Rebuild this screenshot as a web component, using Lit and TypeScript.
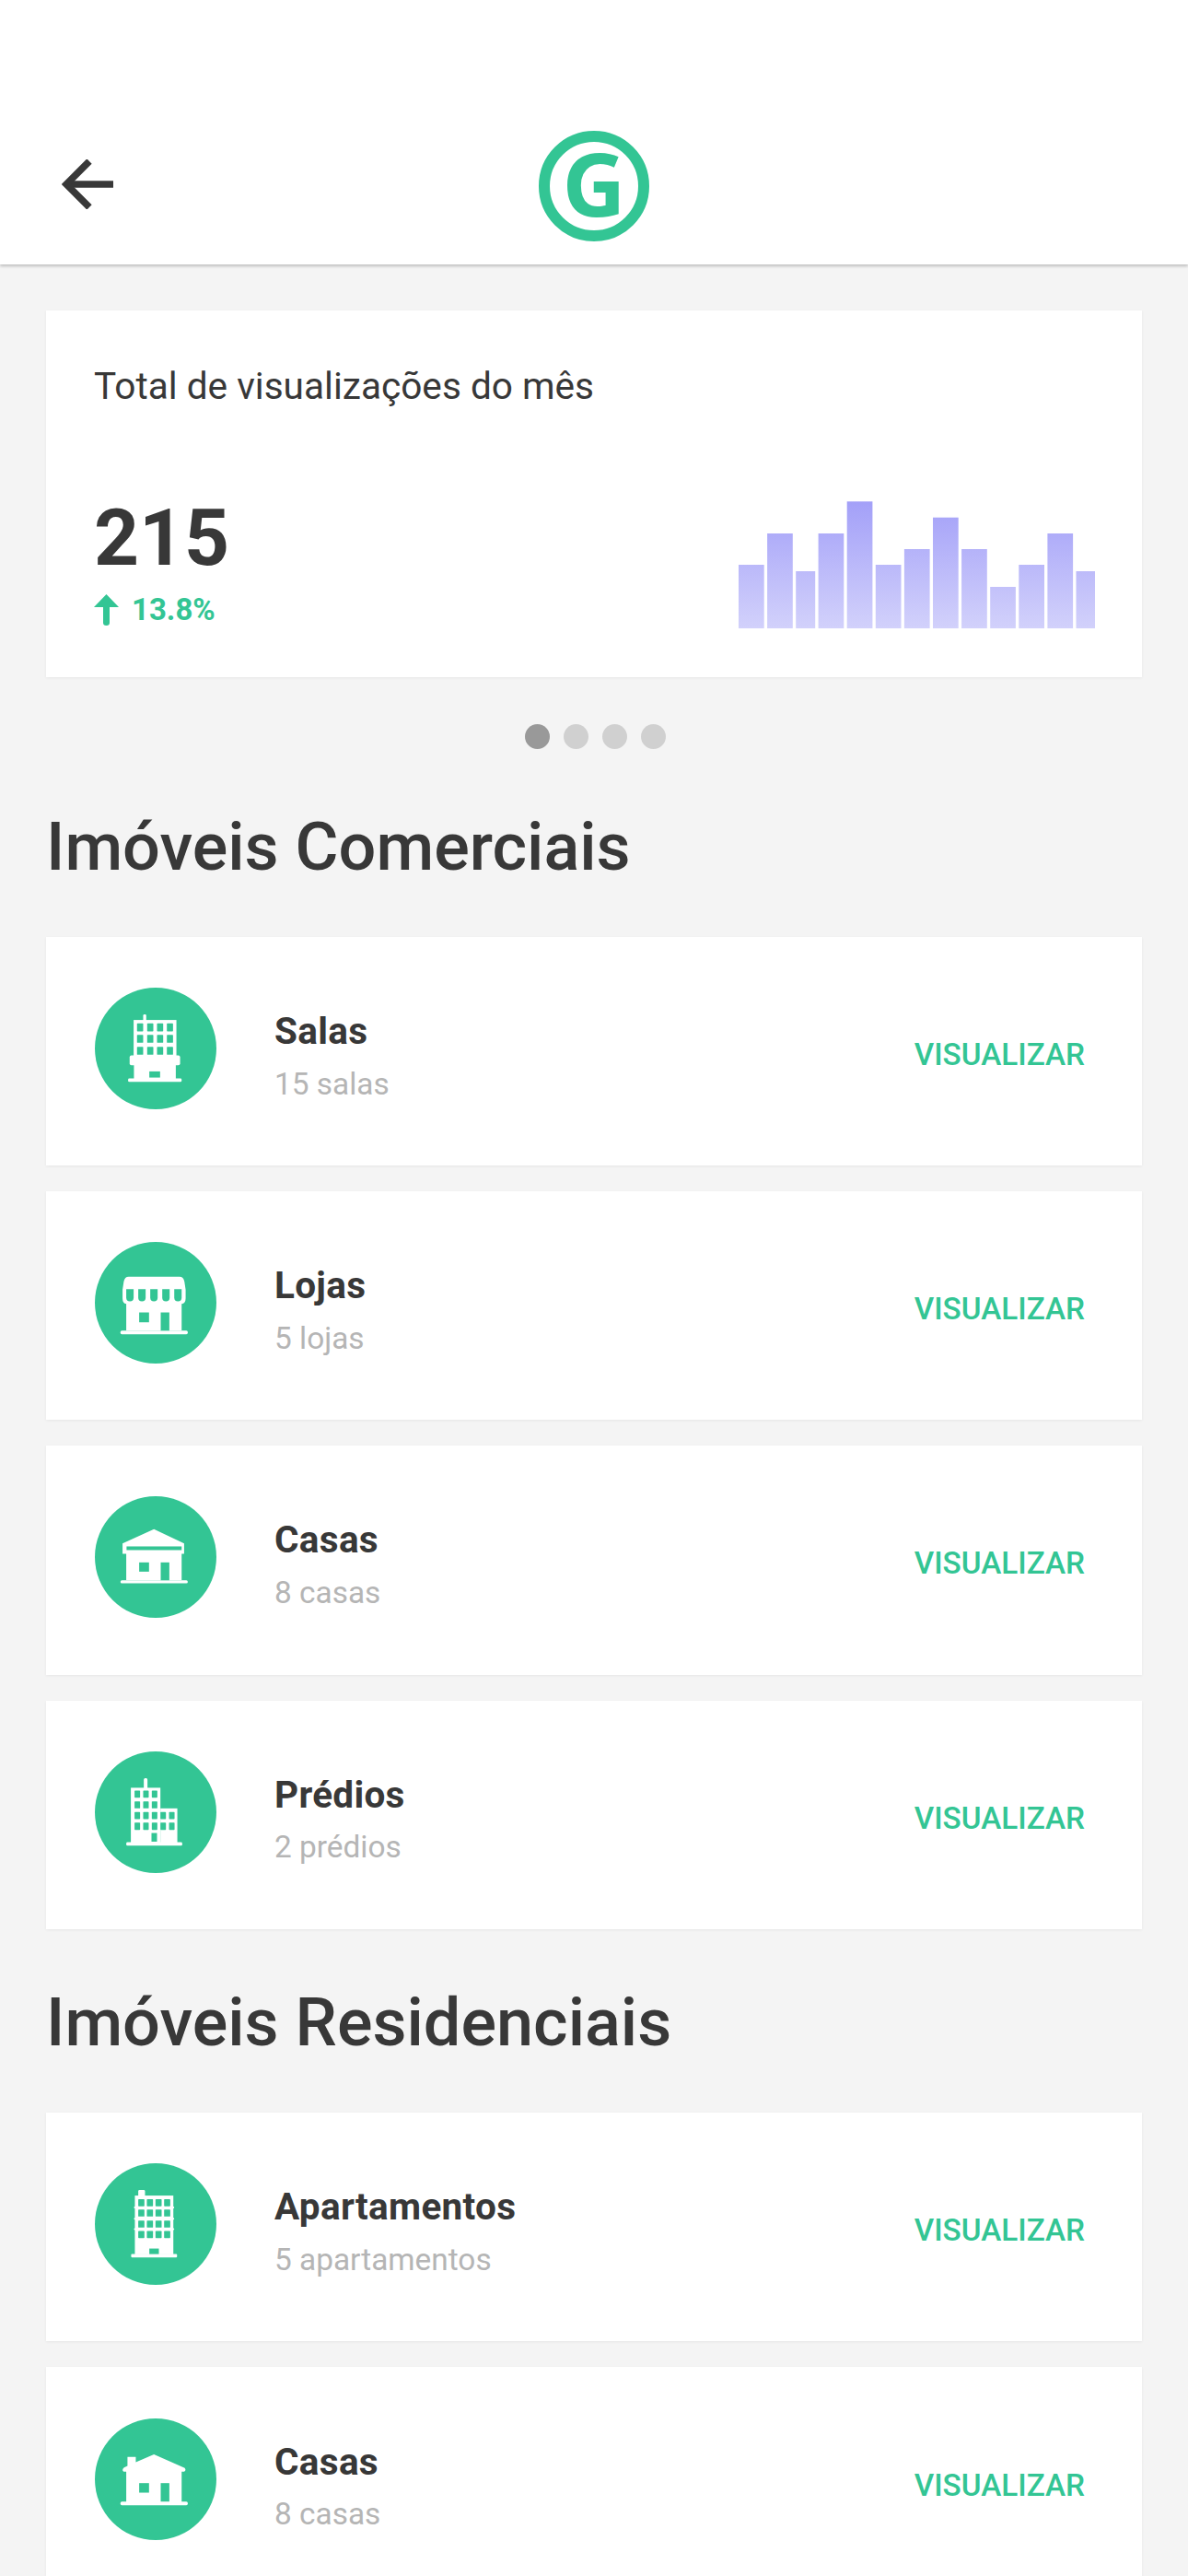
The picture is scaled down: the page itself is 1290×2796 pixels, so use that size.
import { LitElement, css, html, svg } from 'lit';
import { customElement } from 'lit/decorators.js';

const GREEN = '#33c594';

// draws a list of [x1, y1, x2, y2] boxes, corners are in the same units as the viewBox
const boxes = (list: number[][], fill: string, r = 0) =>
  list.map(
    ([a, b, c, d]) =>
      svg`<rect x=${a} y=${b} width=${c - a} height=${d - b} rx=${r} fill=${fill}></rect>`
  );

// window grid helper
const grid = (cols: number[][], rows: number[][]) =>
  rows.flatMap(([t, b]) => cols.map(([l, r]) => [l, t, r, b]));

const ICONS = {
  salas: {
    top: 70,
    art: svg`
      ${boxes([[227, 157, 237, 180]], '#fff', 4)}
      ${boxes([[196, 175, 335, 295], [197, 320, 333, 367]], '#fff')}
      ${boxes([[183, 290, 347, 322]], '#fff', 6)}
      ${boxes([[178, 365, 352, 376]], '#fff', 4)}
      ${boxes(grid([[207, 227], [240, 260], [272, 292], [304, 324]], [[186, 212], [223, 249], [262, 288]]), GREEN, 2)}
      ${boxes([[247, 342, 282, 362]], GREEN)}
    `,
  },
  lojas: {
    top: 57,
    art: svg`
      <path fill="#fff" d="M180 170H345Q358 170 361 186L365 212V240Q365 256 352 258V345H172V258Q160 256 160 240V212L164 186Q167 170 180 170Z"></path>
      ${boxes([[153, 345, 372, 357]], '#fff', 5)}
      ${[172, 211, 250, 289, 328].map(
        (x) => svg`<path fill=${GREEN} d="M${x} 210H${x + 24}V238Q${x + 24} 250 ${x + 12} 250Q${x} 250 ${x} 238Z"></path>`
      )}
      ${boxes([[214, 286, 246, 318], [284, 286, 312, 345]], GREEN)}
    `,
  },
  casas: {
    top: 75,
    art: svg`
      <path fill="#fff" d="M262 182L360 228V262H352V348H172V262H160V228Z"></path>
      ${boxes([[153, 348, 372, 358]], '#fff', 5)}
      ${boxes([[173, 238, 352, 250], [214, 290, 246, 320], [284, 290, 312, 348]], GREEN)}
    `,
  },
  predios: {
    top: 65,
    art: svg`
      ${boxes([[229, 152, 241, 190]], '#fff', 5)}
      ${boxes([[187, 183, 283, 362], [283, 250, 338, 362]], '#fff')}
      ${boxes([[172, 360, 354, 371]], '#fff', 4)}
      ${boxes(grid([[199, 217], [227, 245], [255, 273]], [[192, 215], [227, 250], [262, 285], [296, 320]]), GREEN, 2)}
      ${boxes(grid([[283, 301], [311, 329]], [[262, 285], [296, 320]]), GREEN, 2)}
      ${boxes([[254, 330, 272, 358]], GREEN)}
    `,
  },
  apartamentos: {
    top: 28,
    art: svg`
      ${boxes([[211, 115, 233, 140]], '#fff', 4)}
      ${boxes([[200, 133, 325, 324]], '#fff')}
      ${boxes([[197, 169, 328, 175], [197, 205, 328, 211], [197, 239, 328, 245]], '#fff', 3)}
      ${boxes([[188, 323, 337, 334]], '#fff', 3)}
      ${boxes(grid([[211, 231], [239, 259], [267, 287], [295, 315]], [[145, 168], [178, 201], [214, 237], [248, 271]]), GREEN, 2)}
      ${boxes([[247, 305, 278, 323]], GREEN)}
    `,
  },
  casa: {
    top: 15,
    art: svg`
      <path fill="#fff" d="M165 174L176 169V140H203V157L262 132L362 176Q368 184 360 188H352V287H172V188H164Q156 182 165 174Z"></path>
      ${boxes([[153, 285, 372, 297]], '#fff', 5)}
      ${boxes([[214, 225, 246, 256], [284, 225, 312, 285]], GREEN)}
    `,
  },
};

type IconName = keyof typeof ICONS;

const COMERCIAIS: { icon: IconName; name: string; sub: string }[] = [
  { icon: 'salas', name: 'Salas', sub: '15 salas' },
  { icon: 'lojas', name: 'Lojas', sub: '5 lojas' },
  { icon: 'casas', name: 'Casas', sub: '8 casas' },
  { icon: 'predios', name: 'Prédios', sub: '2 prédios' },
];

const RESIDENCIAIS: { icon: IconName; name: string; sub: string }[] = [
  { icon: 'apartamentos', name: 'Apartamentos', sub: '5 apartamentos' },
  { icon: 'casa', name: 'Casas', sub: '8 casas' },
];

// heights and widths measured on the chart, baseline at 140
const BARS = [
  [27.7, 69], [27.7, 103], [21, 62], [27.7, 103], [27.7, 137.7], [27.7, 69], [27.7, 86],
  [27.7, 120.3], [27.7, 86], [27.7, 45], [27.7, 69], [27.7, 103], [21, 62],
];

@customElement('app-root')
export class AppRoot extends LitElement {
  static styles = css`
    :host {
      --green: #33c594;
      display: block;
      height: 2796px;
      overflow: hidden;
      background: #f4f4f4;
      color: #383838;
      font-family: Roboto, sans-serif;
    }
    .top {
      height: 287px;
      box-sizing: border-box;
      background: #fff;
      box-shadow: 0 2px 3px rgba(0, 0, 0, 0.22);
      position: relative;
      display: flex;
      align-items: flex-end;
      justify-content: center;
      padding-bottom: 25px;
    }
    .back {
      position: absolute;
      left: 67px;
      top: 173px;
      display: block;
    }
    .logo {
      width: 120px;
      height: 120px;
      box-sizing: border-box;
      border: 12px solid var(--green);
      border-radius: 50%;
      padding-bottom: 8px;
      display: flex;
      align-items: center;
      justify-content: center;
      color: var(--green);
      font: 700 95px/1 'Open Sans', sans-serif;
    }
    main {
      padding: 50px 50px 0;
    }
    .card {
      background: #fff;
      box-shadow: 0 1px 3px rgba(0, 0, 0, 0.06);
    }
    .stats {
      height: 398px;
      box-sizing: border-box;
      padding: 57px 52px 0;
    }
    .stats h2 {
      margin: 0;
      font-size: 40.6px;
      font-weight: 400;
      line-height: 50px;
    }
    .stats-row {
      display: flex;
      justify-content: space-between;
      margin-top: 96px;
    }
    .total {
      font-size: 85.5px;
      font-weight: 700;
      line-height: 88px;
    }
    .delta {
      display: flex;
      align-items: center;
      gap: 14px;
      color: var(--green);
      font-size: 33px;
      font-weight: 700;
      line-height: 40px;
      margin-top: 14px;
    }
    .chart {
      display: block;
      margin: 2px -1px 0 0;
    }
    .dots {
      display: flex;
      justify-content: center;
      gap: 15px;
      margin: 51px 0 0 3px;
    }
    .dot {
      width: 27px;
      height: 27px;
      border-radius: 50%;
      background: #d0d0d0;
    }
    .dot.on {
      background: #999;
    }
    h1 {
      margin: 0;
      font-size: 72px;
      font-weight: 500;
      line-height: 84px;
    }
    .head-a {
      margin-top: 65px;
    }
    .head-b {
      margin-top: 60.500px;
    }
    .list {
      display: flex;
      flex-direction: column;
      gap: 28px;
      margin-top: 55px;
    }
    .row {
      height: 248.2px;
      box-sizing: border-box;
      padding: 0 62px 0 53px;
      display: flex;
      align-items: center;
    }
    .circle {
      width: 132px;
      height: 132px;
      flex: none;
      display: block;
      margin-bottom: 6px;
    }
    .info {
      margin-left: 63px;
      margin-top: 10.5px;
      flex: 1;
    }
    .name {
      font-size: 40.5px;
      letter-spacing: 0.3px;
      font-weight: 700;
      line-height: 46px;
    }
    .sub {
      font-size: 33.4px;
      color: #b5b5b5;
      line-height: 40px;
      margin-top: 14.5px;
    }
    .action {
      color: var(--green);
      font-size: 33.3px;
      font-weight: 500;
      margin-top: 7px;
    }
  `;

  private renderRow(item: { icon: IconName; name: string; sub: string }) {
    const icon = ICONS[item.icon];
    return html`
      <div class="card row">
        <svg class="circle" viewBox="70 ${icon.top} 395 395">
          <circle cx="267.5" cy=${icon.top + 197.5} r="197.5" fill=${GREEN}></circle>
          ${icon.art}
        </svg>
        <div class="info">
          <div class="name">${item.name}</div>
          <div class="sub">${item.sub}</div>
        </div>
        <div class="action">VISUALIZAR</div>
      </div>
    `;
  }

  private renderChart() {
    let x = 0;
    return html`
      <svg class="chart" width="387" height="140" viewBox="0 0 387 140">
        <defs>
          <linearGradient id="barFill" gradientUnits="userSpaceOnUse" x1="0" y1="2" x2="0" y2="140">
            <stop offset="0" stop-color="#a3a0f8"></stop>
            <stop offset="1" stop-color="#d2d1fb"></stop>
          </linearGradient>
        </defs>
        ${BARS.map(([w, h]) => {
          const bar = svg`<rect x=${x} y=${140 - h} width=${w} height=${h} fill="url(#barFill)"></rect>`;
          x += w + 3.4;
          return bar;
        })}
      </svg>
    `;
  }

  render() {
    return html`
      <header class="top">
        <svg class="back" width="56" height="54" viewBox="0 0 56 54" fill="none" stroke="#383838" stroke-width="7.5">
          <path d="M56 27H6"></path>
          <path d="M30 2L5 27L30 52"></path>
        </svg>
        <div class="logo">G</div>
      </header>
      <main>
        <section class="card stats">
          <h2>Total de visualizações do mês</h2>
          <div class="stats-row">
            <div>
              <div class="total">215</div>
              <div class="delta">
                <svg width="27" height="34" viewBox="0 0 27 34">
                  <path fill=${GREEN} d="M13.5 0L27 14H17V31Q17 34 13.500 34Q10 34 10 31V14H0Z"></path>
                </svg>
                13.8%
              </div>
            </div>
            ${this.renderChart()}
          </div>
        </section>
        <div class="dots">
          <span class="dot on"></span><span class="dot"></span><span class="dot"></span><span class="dot"></span>
        </div>
        <h1 class="head-a">Imóveis Comerciais</h1>
        <div class="list">${COMERCIAIS.map((i) => this.renderRow(i))}</div>
        <h1 class="head-b">Imóveis Residenciais</h1>
        <div class="list">${RESIDENCIAIS.map((i) => this.renderRow(i))}</div>
      </main>
    `;
  }
}
